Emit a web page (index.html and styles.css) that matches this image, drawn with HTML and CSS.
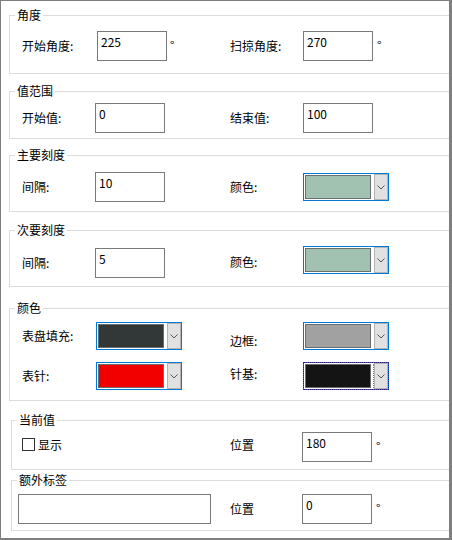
FILE: index.html
```html
<!DOCTYPE html>
<html lang="zh-CN">
<head>
<meta charset="utf-8">
<title>仪表属性</title>
<link rel="stylesheet" href="styles.css">
</head>
<body>
<div class="window">

  <div class="group g-angle">
    <span class="legend">角度</span>
    <div class="row cols-a">
      <span class="label">开始角度:</span>
      <div class="textbox">225</div>
      <span class="deg">°</span>
      <span class="label">扫掠角度:</span>
      <div class="textbox">270</div>
      <span class="deg deg-r">°</span>
    </div>
  </div>

  <div class="group g-range">
    <span class="legend">值范围</span>
    <div class="row cols-b">
      <span class="label">开始值:</span>
      <div class="textbox">0</div>
      <span></span>
      <span class="label">结束值:</span>
      <div class="textbox">100</div>
    </div>
  </div>

  <div class="group g-major">
    <span class="legend">主要刻度</span>
    <div class="row cols-b">
      <span class="label">间隔:</span>
      <div class="textbox">10</div>
      <span></span>
      <span class="label">颜色:</span>
      <div class="combo">
        <span class="swatch sw-sage"></span>
        <span class="drop"><svg width="8" height="5" viewBox="0 0 8 5"><path d="M0.5 0.5 L4 4 L7.5 0.5" fill="none" stroke="#555" stroke-width="1"/></svg></span>
      </div>
    </div>
  </div>

  <div class="group g-minor">
    <span class="legend">次要刻度</span>
    <div class="row cols-b">
      <span class="label">间隔:</span>
      <div class="textbox">5</div>
      <span></span>
      <span class="label lbl-up2">颜色:</span>
      <div class="combo combo-up">
        <span class="swatch sw-sage"></span>
        <span class="drop"><svg width="8" height="5" viewBox="0 0 8 5"><path d="M0.5 0.5 L4 4 L7.5 0.5" fill="none" stroke="#555" stroke-width="1"/></svg></span>
      </div>
    </div>
  </div>

  <div class="group g-color">
    <span class="legend">颜色</span>
    <div class="row row-combo cols-c">
      <span class="label">表盘填充:</span>
      <div class="combo">
        <span class="swatch sw-dark"></span>
        <span class="drop"><svg width="8" height="5" viewBox="0 0 8 5"><path d="M0.5 0.5 L4 4 L7.5 0.5" fill="none" stroke="#555" stroke-width="1"/></svg></span>
      </div>
      <span></span>
      <span class="label lbl-down">边框:</span>
      <div class="combo">
        <span class="swatch sw-gray"></span>
        <span class="drop"><svg width="8" height="5" viewBox="0 0 8 5"><path d="M0.5 0.5 L4 4 L7.5 0.5" fill="none" stroke="#555" stroke-width="1"/></svg></span>
      </div>
    </div>
    <div class="row row-combo row-gap cols-c">
      <span class="label">表针:</span>
      <div class="combo">
        <span class="swatch sw-red"></span>
        <span class="drop"><svg width="8" height="5" viewBox="0 0 8 5"><path d="M0.5 0.5 L4 4 L7.5 0.5" fill="none" stroke="#555" stroke-width="1"/></svg></span>
      </div>
      <span></span>
      <span class="label lbl-up">针基:</span>
      <div class="combo focused">
        <span class="swatch sw-black"></span>
        <span class="focus-sep"></span>
        <span class="drop"><svg width="8" height="5" viewBox="0 0 8 5"><path d="M0.5 0.5 L4 4 L7.5 0.5" fill="none" stroke="#555" stroke-width="1"/></svg></span>
      </div>
    </div>
  </div>

  <div class="group g-current">
    <span class="legend">当前值</span>
    <div class="row cols-d">
      <label class="check lbl-up"><span class="box"></span>显示</label>
      <span class="label lbl-up">位置</span>
      <div class="textbox">180</div>
      <span class="deg deg-r">°</span>
    </div>
  </div>

  <div class="group g-extra">
    <span class="legend">额外标签</span>
    <div class="row cols-e">
      <div class="textbox wide"></div>
      <span class="label">位置</span>
      <div class="textbox">0</div>
      <span class="deg deg-r">°</span>
    </div>
  </div>

</div>
</body>
</html>
```

FILE: styles.css
```css
* { box-sizing: border-box; }

html, body {
  margin: 0;
  padding: 0;
  background: #ffffff;
}

body {
  font-family: "Noto Sans CJK SC", "Noto Sans", sans-serif;
  font-size: 12px;
  line-height: 16px;
  color: #000000;
}

.window {
  width: 452px;
  height: 540px;
  overflow: hidden;
  background: #ffffff;
  border-style: solid;
  border-color: #7f7f7f;
  border-width: 1px 3px 2px 1px;
}

.group {
  position: relative;
  width: 470px;
  margin-left: 8px;
  border: 1px solid #dcdcdc;
}

.legend {
  position: absolute;
  top: -9px;
  left: 5px;
  padding: 0 2px;
  background: #ffffff;
  line-height: 16px;
  white-space: nowrap;
}

/* group vertical placement */
.g-angle   { margin-top: 14px; padding: 15px 0 12px; }
.g-range   { margin-top: 17px; padding: 11px 0 5px; }
.g-major   { margin-top: 16px; padding: 16px 0 9px; }
.g-minor   { margin-top: 18px; padding: 15px 0 10px; }
.g-color   { margin-top: 21px; padding: 13px 0 10px; }
.g-current { margin-top: 19px; padding: 11px 0 7px; margin-left: 10px; }
.g-extra   { margin-top: 10px; padding: 13px 0 6px; margin-left: 10px; }

.row {
  display: grid;
  align-items: center;
  height: 30px;
}

.row-combo { height: 28px; }
.row-gap { margin-top: 12px; }

.cols-a { grid-template-columns: 75px 70px 63px 73px 70px auto; padding-left: 12px; }
.cols-b { grid-template-columns: 73px 70px 65px 73px 86px; padding-left: 12px; }
.cols-c { grid-template-columns: 74px 86px 48px 73px 86px; padding-left: 12px; }
.cols-d { grid-template-columns: 208px 72px 70px auto; padding-left: 10px; }
.cols-e { grid-template-columns: 212px 72px 70px auto; padding-left: 6px; }

.label { white-space: nowrap; }
.lbl-down { margin-top: 10px; }
.lbl-up { margin-bottom: 5px; }
.lbl-up2 { margin-bottom: 3px; }

.textbox {
  width: 70px;
  height: 30px;
  border: 1px solid #7a7a7a;
  background: #ffffff;
  padding: 2px 3px;
  white-space: nowrap;
}

.textbox.wide { width: 193px; }

.deg {
  padding-left: 3px;
  margin-bottom: 2px;
}

.deg-r { padding-left: 4px; }

.combo {
  display: flex;
  align-items: stretch;
  width: 86px;
  height: 28px;
  border: 1px solid #0078d7;
  background: #ffffff;
}

.combo-up { margin-bottom: 6px; }

.swatch {
  width: 66px;
  margin: 1px;
  border: 1px solid #6d6d6d;
}

.sw-sage  { background: #a1c1b1; }
.sw-dark  { background: #323738; }
.sw-red   { background: #f20000; }
.sw-gray  { background: #a1a1a1; }
.sw-black { background: #141414; }

.drop {
  width: 14px;
  margin-left: auto;
  background: #e1e1e1;
  border: 1px solid #b4b4b4;
  display: flex;
  align-items: center;
  justify-content: center;
}

.drop svg { display: block; }

.focused {
  outline: 1px dotted #2a1a8a;
  outline-offset: -1px;
}

.focus-sep {
  width: 0;
  margin: 1px 0 1px 1px;
  border-left: 1px dotted #7a7a7a;
}

.check {
  display: flex;
  align-items: center;
  gap: 3px;
}

.check .box {
  width: 13px;
  height: 13px;
  border: 1px solid #333333;
  background: #ffffff;
}
```
